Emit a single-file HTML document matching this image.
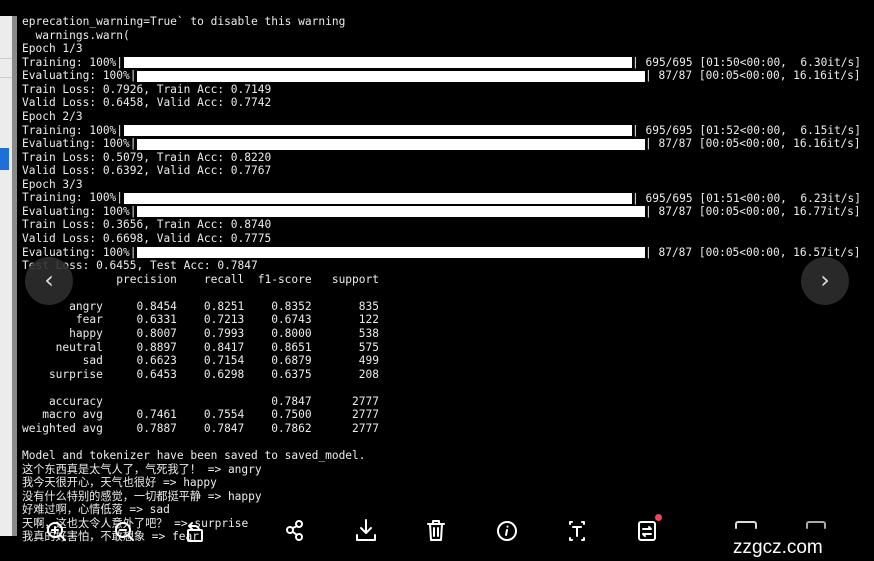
<!DOCTYPE html>
<html><head><meta charset="utf-8"><style>
html,body{margin:0;padding:0;background:#000;width:874px;height:561px;overflow:hidden;position:relative}
.side{position:absolute;left:0;top:16px;width:12px;height:520px;background:#ececec}
.side .b{position:absolute;left:12px;top:0;width:5px;height:520px;background:#8a8a8a}
pre{position:absolute;left:22px;top:15px;margin:0;font:11.2px/13.57px "DejaVu Sans Mono","Noto Sans CJK SC",monospace;color:#ececec;white-space:pre}
.bar{position:absolute;height:11px;background:#fff}
.r{position:absolute;font:11.2px/13.57px "DejaVu Sans Mono",monospace;color:#ececec;white-space:pre}
.circ{position:absolute;width:48px;height:48px;border-radius:50%;background:rgba(45,45,45,.9);color:#ddd;font:24px "DejaVu Sans",sans-serif;text-align:center;line-height:46px}
.wm{position:absolute;left:733px;top:537px;font:19px "Liberation Sans",sans-serif;color:#fff}
</style></head><body>
<div class="side"><div style="position:absolute;top:42px;width:12px;height:1px;background:#ccc"></div><div style="position:absolute;top:61px;width:12px;height:1px;background:#ccc"></div><div style="position:absolute;top:132px;width:9px;height:22px;background:#1e6fd9"></div><div class="b"></div></div>
<pre>eprecation_warning=True` to disable this warning
  warnings.warn(
Epoch 1/3
Training: 100%|
Evaluating: 100%|
Train Loss: 0.7926, Train Acc: 0.7149
Valid Loss: 0.6458, Valid Acc: 0.7742
Epoch 2/3
Training: 100%|
Evaluating: 100%|
Train Loss: 0.5079, Train Acc: 0.8220
Valid Loss: 0.6392, Valid Acc: 0.7767
Epoch 3/3
Training: 100%|
Evaluating: 100%|
Train Loss: 0.3656, Train Acc: 0.8740
Valid Loss: 0.6698, Valid Acc: 0.7775
Evaluating: 100%|
Test Loss: 0.6455, Test Acc: 0.7847
              precision    recall  f1-score   support

       angry     0.8454    0.8251    0.8352       835
        fear     0.6331    0.7213    0.6743       122
       happy     0.8007    0.7993    0.8000       538
     neutral     0.8897    0.8417    0.8651       575
         sad     0.6623    0.7154    0.6879       499
    surprise     0.6453    0.6298    0.6375       208

    accuracy                         0.7847      2777
   macro avg     0.7461    0.7554    0.7500      2777
weighted avg     0.7887    0.7847    0.7862      2777

Model and tokenizer have been saved to saved_model.
这个东西真是太气人了，气死我了！ =&gt; angry
我今天很开心，天气也很好 =&gt; happy
没有什么特别的感觉，一切都挺平静 =&gt; happy
好难过啊，心情低落 =&gt; sad
天啊，这也太令人意外了吧？ =&gt; surprise
我真的好害怕，不敢想象 =&gt; fear</pre>
<div class="bar" style="left:124px;top:57px;width:508px"></div>
<div class="bar" style="left:137px;top:71px;width:508px"></div>
<div class="bar" style="left:124px;top:125px;width:508px"></div>
<div class="bar" style="left:137px;top:139px;width:508px"></div>
<div class="bar" style="left:124px;top:193px;width:508px"></div>
<div class="bar" style="left:137px;top:206px;width:508px"></div>
<div class="bar" style="left:137px;top:247px;width:508px"></div>
<div class="r" style="left:632px;top:56px">| 695/695 [01:50&lt;00:00,  6.30it/s]</div>
<div class="r" style="left:645px;top:69px">| 87/87 [00:05&lt;00:00, 16.16it/s]</div>
<div class="r" style="left:632px;top:124px">| 695/695 [01:52&lt;00:00,  6.15it/s]</div>
<div class="r" style="left:645px;top:137px">| 87/87 [00:05&lt;00:00, 16.16it/s]</div>
<div class="r" style="left:632px;top:192px">| 695/695 [01:51&lt;00:00,  6.23it/s]</div>
<div class="r" style="left:645px;top:205px">| 87/87 [00:05&lt;00:00, 16.77it/s]</div>
<div class="r" style="left:645px;top:246px">| 87/87 [00:05&lt;00:00, 16.57it/s]</div>
<div class="circ" style="left:25px;top:257px">&#8249;</div>
<div class="circ" style="left:801px;top:257px">&#8250;</div>
<svg width="874" height="561" style="position:absolute;left:0;top:0" fill="none" stroke="#fff" stroke-width="2" stroke-linecap="round" stroke-linejoin="round">
<circle cx="55" cy="530" r="7"/><path d="M60 535l5 5M52 530h6M55 527v6"/>
<circle cx="123" cy="530" r="7"/><path d="M128 535l5 5M120 530h6"/>
<rect x="188" y="530" width="14" height="11" rx="1"/><path d="M192 523l-3 3 3 3M189 526h6a4 4 0 0 1 4 4"/>
<circle cx="290" cy="530" r="3"/><circle cx="299" cy="524" r="3"/><circle cx="299" cy="537" r="3"/><path d="M293 528l4-2M293 532l4 3"/>
<path d="M366 520v13M361 528l5 5 5-5M357 535v5h18v-5"/>
<path d="M428 524h16M433 524v-3h6v3M430 524l1 16h10l1-16M434 528v8M438 528v8"/>
<circle cx="507" cy="531" r="9"/><path d="M507 530l-1 5M507.5 526.5v.2"/>
<path d="M570 524v-2h2M582 522h2v2M570 538v2h2M582 540h2v-2M573 527h8M577 527v9"/>
<rect x="639" y="522" width="16" height="18" rx="2"/><path d="M643 529h8l-2-2M651 534h-8l2 2"/>
<path d="M736 528v-4a2 2 0 0 1 2-2h16a2 2 0 0 1 2 2v4" stroke="#ddd"/><path d="M807 528v-4a2 2 0 0 1 2-2h14a2 2 0 0 1 2 2v4" stroke="#aaa"/>
</svg>
<div style="position:absolute;left:655px;top:514px;width:7px;height:7px;border-radius:50%;background:#f0465a"></div>
<div class="wm">zzgcz.com</div>
</body></html>
